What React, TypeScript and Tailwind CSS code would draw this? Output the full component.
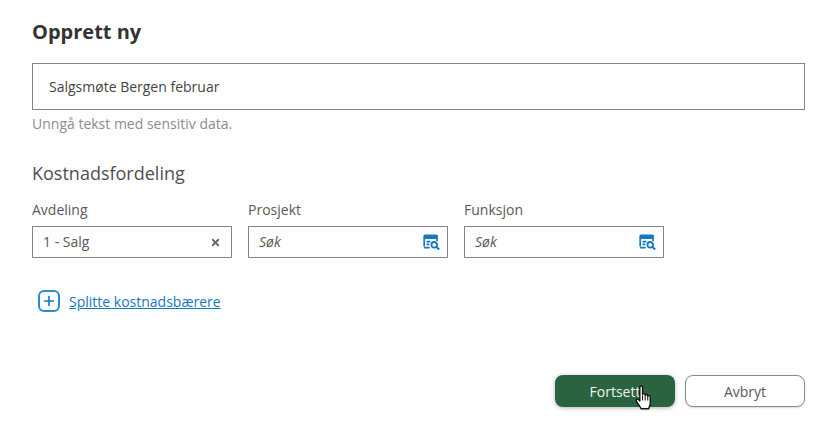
import { X } from "lucide-react";

function LookupIcon() {
    return (
        <svg width="17" height="16" viewBox="0 0 17 16" fill="none" className="shrink-0">
            <path d="M1.2 12.5V2c0-.4.3-.7.7-.7h11.4c.4 0 .7.3.7.7v5" stroke="#1578c2" strokeWidth="1.7" />
            <path d="M1 1h13.5V5H1z" fill="#1578c2" />
            <path d="M3.5 7.6h4M3.5 10.4h2.8M1 13.6h5.8" stroke="#1578c2" strokeWidth="1.6" />
            <circle cx="11.2" cy="10.8" r="2.8" stroke="#1578c2" strokeWidth="1.8" />
            <path d="M13.2 12.8l3 2.7" stroke="#1578c2" strokeWidth="2.1" />
        </svg>
    );
}

function HandCursor() {
    return (
        <svg width="20" height="26" viewBox="0 0 18 25" className="absolute left-[634px] top-[385px]">
            <path
                d="M5 2.2c0-1.6 2.6-1.6 2.6 0v7c0-1.2 2.4-1.2 2.5 0v.8c0-1.2 2.4-1.2 2.5 0v1c0-1.2 2.4-1 2.4.3v6.2c0 2.5-1 3.4-1.5 5.3H6.2c-.8-2.2-2.6-3.6-4.4-7-.9-1.8.9-3 2.2-1.6l1 1.2z"
                fill="#fff"
                stroke="#111"
                strokeWidth="1.3"
                strokeLinejoin="round"
            />
            <path d="M7.6 10v5M10.1 10v5M12.6 11v4" stroke="#111" strokeWidth="1" />
        </svg>
    );
}

function LookupField({ label }: { label: string }) {
    return (
        <div className="w-[200px]">
            <div className="h-[28px] text-[14px] leading-[24px] text-[#595959]">{label}</div>
            <div className="flex h-[32px] items-center justify-between border border-[#858585] pl-[10px] pr-[7px]">
                <span className="pb-[2px] text-[14px] italic text-[#595959]">Søk</span>
                <LookupIcon />
            </div>
        </div>
    );
}

export default function App() {
    return (
        <div className="relative h-[421px] w-[824px] overflow-hidden bg-white px-[32px] pr-[19px] font-['Open_Sans',sans-serif]">
            <h1 className="pt-[18px] text-[20px] font-bold leading-[28px] text-[#333333]">Opprett ny</h1>

            <div className="mt-[17px] flex h-[47px] items-center border border-[#858585] px-[16px] text-[14px] text-[#444444]">
                Salgsmøte Bergen februar
            </div>
            <p className="mt-[4px] text-[14px] leading-[20px] text-[#8c8c8c]">Unngå tekst med sensitiv data.</p>

            <h2 className="mt-[25px] text-[18px] leading-[28px] text-[#4f4f4f]">Kostnadsfordeling</h2>

            <div className="mt-[11px] flex gap-[16px]">
                <div className="w-[200px]">
                    <div className="h-[28px] text-[14px] leading-[24px] text-[#595959]">Avdeling</div>
                    <div className="flex h-[32px] items-center justify-between border border-[#858585] pl-[10px] pr-[10px]">
                        <span className="pb-[2px] text-[14px] text-[#595959]">1 - Salg</span>
                        <X size={11} strokeWidth={4} className="text-[#666666]" />
                    </div>
                </div>
                <LookupField label="Prosjekt" />
                <LookupField label="Funksjon" />
            </div>

            <div className="mt-[32px] flex items-center gap-[9px] pl-[6px]">
                <span className="flex h-[22px] w-[22px] items-center justify-center rounded-[6px] border-2 border-[#2a8ad4]">
                    <svg width="12" height="12" viewBox="0 0 12 12">
                        <path d="M6 1v10M1 6h10" stroke="#1578c2" strokeWidth="1.6" />
                    </svg>
                </span>
                <a href="#" className="text-[14px] text-[#1578c2] underline">Splitte kostnadsbærere</a>
            </div>

            <div className="mt-[63px] flex justify-end gap-[10px]">
                <button className="h-[32px] w-[120px] rounded-[8px] bg-[#2a6340] text-[14px] font-normal text-[#f2f2f2] shadow-[0_1px_4px_rgba(0,0,0,0.3)]">
                    Fortsett
                </button>
                <button className="h-[32px] w-[120px] rounded-[8px] border border-[#8a8a8a] bg-white text-[14px] text-[#595959] shadow-[0_1px_2px_rgba(0,0,0,0.15)]">
                    Avbryt
                </button>
            </div>

            <HandCursor />
        </div>
    );
}
